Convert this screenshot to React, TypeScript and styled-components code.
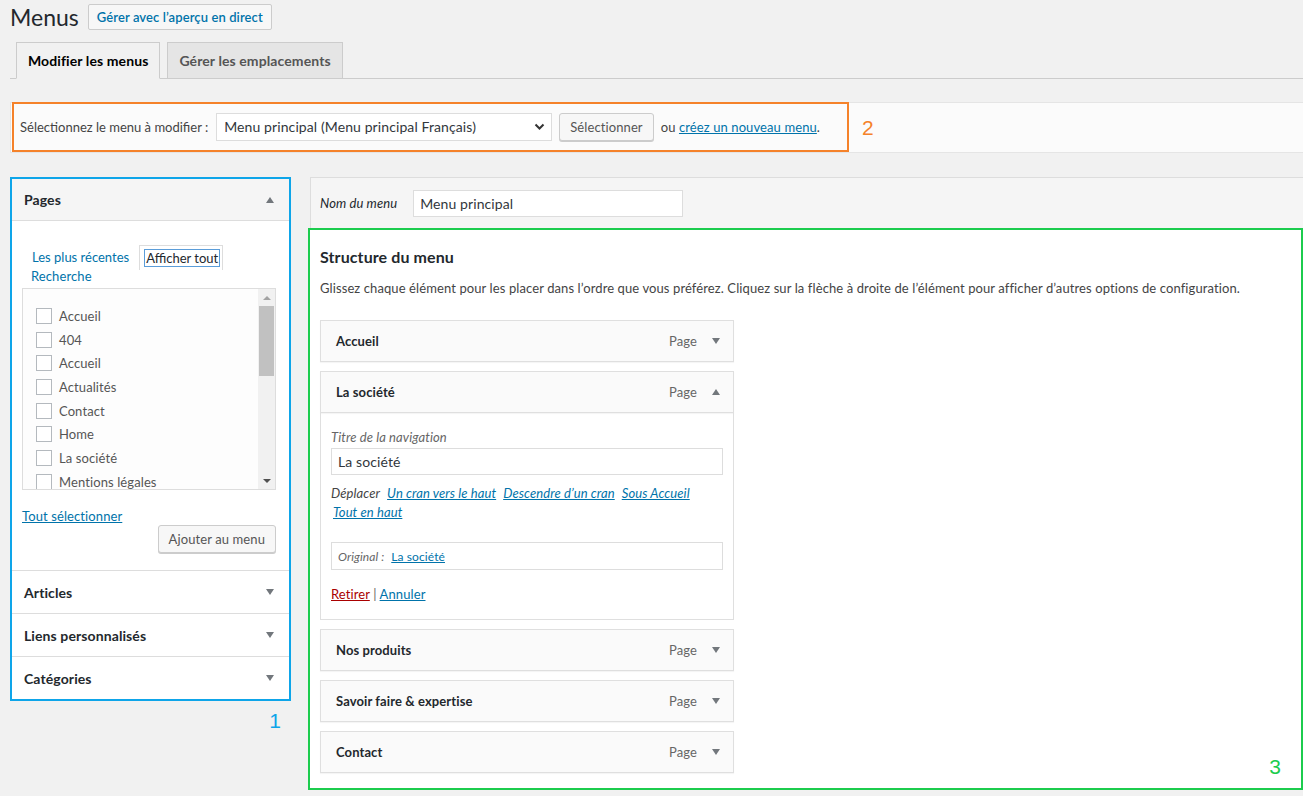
import React from 'react';
import styled, { createGlobalStyle } from 'styled-components';

const GlobalStyle = createGlobalStyle`
  body {
    margin: 0;
    background: #f1f1f1;
    font-family: Lato, "Liberation Sans", sans-serif;
    font-size: 13px;
    letter-spacing: 0.1px;
    color: #444;
  }
  * { box-sizing: border-box; }
`;

const Wrap = styled.div`
  padding: 4px 0 0 10px;
  width: 1303px;
`;

const HeaderRow = styled.div`
  display: flex;
  align-items: center;
  gap: 9px;
`;

const PageTitle = styled.h1`
  margin: 0;
  font-size: 23px;
  font-weight: 400;
  color: #23282d;
  line-height: 26px;
  letter-spacing: 0;
`;

const TitleButton = styled.button`
  height: 26px;
  padding: 0 8px;
  border: 1px solid #ccc;
  border-radius: 2px;
  background: #f7f7f7;
  color: #0073aa;
  font-family: inherit;
  font-size: 13px;
  font-weight: 600;
  letter-spacing: 0.1px;
`;

const Tabs = styled.div`
  display: flex;
  gap: 7px;
  margin-top: 12px;
  padding-left: 6px;
  border-bottom: 1px solid #ccc;
`;

const Tab = styled.div<{ $active?: boolean }>`
  height: 37px;
  margin-bottom: -1px;
  padding: 0 11px;
  display: flex;
  align-items: center;
  border: 1px solid #ccc;
  border-bottom-color: ${p => (p.$active ? '#f1f1f1' : '#ccc')};
  background: ${p => (p.$active ? '#f1f1f1' : '#e5e5e5')};
  color: ${p => (p.$active ? '#000' : '#555')};
  font-size: 14px;
  font-weight: 700;
`;

const ManageBar = styled.div`
  margin-top: 23px;
  display: flex;
  align-items: center;
  background: #fbfbfb;
  border: 1px solid #e5e5e5;
  border-right: none;
  height: 51px;
`;

const Annotated = styled.div<{ $color: string }>`
  border: 2px solid ${p => p.$color};
`;

const ManageBox = styled(Annotated)`
  display: flex;
  align-items: center;
  gap: 7px;
  height: 50px;
  margin: -2px 0 0 1px;
  padding: 0 0 0 6px;
  width: 837px;
`;

const Label = styled.span<{ $color: string }>`
  color: ${p => p.$color};
  font-family: "Liberation Sans", Arial, sans-serif;
  font-size: 21px;
`;

const BarText = styled.span`
  color: #444;
  margin-right: 1px;
  letter-spacing: 0;
`;

const Select = styled.div`
  width: 336px;
  height: 28px;
  display: flex;
  align-items: center;
  justify-content: space-between;
  padding: 0 6px 0 7px;
  border: 1px solid #ddd;
  background: #fff;
  color: #32373c;
  font-size: 14px;
`;

const Button = styled.button`
  height: 28px;
  padding: 0 10px;
  border: 1px solid #ccc;
  border-radius: 3px;
  background: #f7f7f7;
  box-shadow: 0 1px 0 #ccc;
  color: #555;
  font-family: inherit;
  font-size: 13px;
  letter-spacing: 0.1px;
`;

const Link = styled.a<{ $danger?: boolean }>`
  color: ${p => (p.$danger ? '#a00' : '#0073aa')};
  text-decoration: underline;
  cursor: pointer;
`;

const Columns = styled.div`
  display: flex;
  align-items: flex-start;
  gap: 17px;
  margin-top: 24px;
`;

const LeftColumn = styled.div`
  width: 281px;
  display: flex;
  flex-direction: column;
  align-items: flex-end;
`;

const SideBox = styled(Annotated)`
  width: 281px;
  margin-left: 1px;
  background: #fff;
`;

const Section = styled.div`
  border-bottom: 1px solid #ddd;
  &:last-child { border-bottom: none; }
`;

const SectionHead = styled.div<{ $open?: boolean }>`
  height: 42px;
  display: flex;
  align-items: center;
  justify-content: space-between;
  padding: 0 15px 0 12px;
  background: ${p => (p.$open ? '#f5f5f5' : '#fff')};
  border-bottom: ${p => (p.$open ? '1px solid #ddd' : 'none')};
  color: #23282d;
  font-size: 14px;
  font-weight: 700;
`;

const Arrow = styled.span<{ $up?: boolean }>`
  width: 0;
  height: 0;
  border-left: 4.5px solid transparent;
  border-right: 4.5px solid transparent;
  ${p => (p.$up ? 'border-bottom' : 'border-top')}: 6px solid #72777c;
`;

const SectionBody = styled.div`
  padding: 22px 13px 17px 10px;
`;

const InnerTabs = styled.div`
  display: flex;
  flex-wrap: wrap;
  align-items: flex-end;
  padding-left: 9px;
  line-height: 18px;
`;

const InnerTab = styled.span<{ $active?: boolean }>`
  padding: ${p => (p.$active ? '3px 3px 3px 5px' : '4px 9px 4px 0')};
  color: ${p => (p.$active ? '#23282d' : '#0073aa')};
  border: 1px solid ${p => (p.$active ? '#ddd' : 'transparent')};
  border-bottom: none;
  background: ${p => (p.$active ? '#fff' : 'transparent')};
  letter-spacing: 0;
  span { outline: ${p => (p.$active ? '1px solid #5b9dd9' : 'none')}; padding: 0 1px; }
`;

const InnerTabLine = styled.div`
  width: 100%;
  color: #0073aa;
  line-height: 13px;
  height: 12px;
  margin-bottom: 6px;
`;

const ListBox = styled.div`
  display: flex;
  height: 202px;
  border: 1px solid #ddd;
  background: #fdfdfd;
`;

const List = styled.ul`
  flex: 1;
  margin: 0;
  padding: 15px 0 0 13px;
  list-style: none;
  overflow: hidden;
`;

const ListItem = styled.li`
  display: flex;
  align-items: center;
  gap: 7px;
  height: 23.7px;
  color: #555;
  font-size: 13px;
`;

const Check = styled.span`
  width: 16px;
  height: 16px;
  border: 1px solid #b4b9be;
  background: #fff;
  flex: none;
`;

const ScrollTrack = styled.div`
  width: 17px;
  display: flex;
  flex-direction: column;
  align-items: center;
  background: #f1f1f1;
`;

const ScrollArrow = styled.div`
  height: 17px;
  display: flex;
  align-items: center;
  justify-content: center;
`;

const ScrollThumb = styled.div`
  width: 15px;
  height: 70px;
  background: #c1c1c1;
`;

const ScrollRest = styled.div`
  flex: 1;
`;

const SmallTri = styled.span<{ $up?: boolean }>`
  width: 0;
  height: 0;
  border-left: 4px solid transparent;
  border-right: 4px solid transparent;
  ${p => (p.$up ? 'border-bottom' : 'border-top')}: 4px solid ${p => (p.$up ? '#a3a3a3' : '#505050')};
`;

const SelectAll = styled.div`
  margin-top: 17px;
  line-height: 18px;
`;

const RightAlign = styled.div`
  display: flex;
  justify-content: flex-end;
`;

const MainColumn = styled.div`
  flex: 1;
  display: flex;
  flex-direction: column;
`;

const NameBar = styled.div`
  height: 51px;
  margin-left: 2px;
  margin-right: -2px;
  display: flex;
  align-items: center;
  gap: 16px;
  padding-left: 9px;
  background: #f5f5f5;
  border: 1px solid #ddd;
  border-right: none;
  border-bottom: none;
`;

const Italic = styled.span`
  font-style: italic;
  color: #23282d;
`;

const TextInput = styled.div<{ $width: string }>`
  width: ${p => p.$width};
  height: 27px;
  display: flex;
  align-items: center;
  padding: 0 6px;
  border: 1px solid #ddd;
  background: #fff;
  color: #32373c;
  font-size: 14px;
`;

const StructureBox = styled(Annotated)`
  position: relative;
  height: 562px;
  background: #fff;
  padding: 15px 10px 0 10px;
`;

const StructureTitle = styled.h3`
  margin: 0;
  font-size: 16px;
  font-weight: 700;
  color: #23282d;
  line-height: 24px;
`;

const Description = styled.p`
  margin: 11px 0 0;
  color: #444;
`;

const Items = styled.div`
  width: 414px;
  margin-top: 24px;
  display: flex;
  flex-direction: column;
  gap: 9px;
`;

const Item = styled.div``;

const ItemHead = styled.div`
  height: 42px;
  display: flex;
  align-items: center;
  padding: 0 13px 0 15px;
  background: #fafafa;
  border: 1px solid #dfdfdf;
  box-shadow: 0 1px 1px rgba(0, 0, 0, 0.04);
  color: #23282d;
  font-weight: 700;
`;

const ItemTitle = styled.span`
  flex: 1;
`;

const ItemType = styled.span`
  color: #666;
  font-weight: 400;
  margin-right: 15px;
`;

const Settings = styled.div`
  border: 1px solid #dfdfdf;
  border-top: none;
  padding: 15px 10px 17px 10px;
  font-size: 13px;
`;

const FieldLabel = styled.div`
  font-style: italic;
  color: #666;
  line-height: 18px;
`;

const MoveRow = styled.div`
  margin-top: 9px;
  line-height: 19px;
  font-style: italic;
  a { margin-left: 7px; }
  a:nth-of-type(4) { margin-left: 2px; }
`;

const Original = styled.div`
  margin-top: 20px;
  height: 28px;
  display: flex;
  align-items: center;
  gap: 7px;
  padding: 0 6px;
  border: 1px solid #ddd;
  font-size: 12px;
`;

const Actions = styled.div`
  margin-top: 16px;
  color: #666;
`;

const CornerLabel = styled(Label)`
  position: absolute;
  right: 20px;
  bottom: 9px;
`;

const pages = ['Accueil', '404', 'Accueil', 'Actualités', 'Contact', 'Home', 'La société', 'Mentions légales'];

const menuItems = ['Nos produits', 'Savoir faire & expertise', 'Contact'];

const App: React.FC = () => {
  return (
    <>
      <GlobalStyle />
      <Wrap>
        <HeaderRow>
          <PageTitle>Menus</PageTitle>
          <TitleButton>Gérer avec l’aperçu en direct</TitleButton>
        </HeaderRow>

        <Tabs>
          <Tab $active>Modifier les menus</Tab>
          <Tab>Gérer les emplacements</Tab>
        </Tabs>

        <ManageBar>
          <ManageBox $color="#f5822a">
            <BarText>Sélectionnez le menu à modifier :</BarText>
            <Select>
              Menu principal (Menu principal Français)
              <svg width="11" height="8" viewBox="0 0 11 8">
                <path d="M1.5 1.5 L5.5 5.5 L9.5 1.5" fill="none" stroke="#333" strokeWidth="2" />
              </svg>
            </Select>
            <Button>Sélectionner</Button>
            <span>
              ou <Link>créez un nouveau menu</Link>.
            </span>
          </ManageBox>
          <Label $color="#f5822a" style={{ marginLeft: 13 }}>2</Label>
        </ManageBar>

        <Columns>
          <LeftColumn>
            <SideBox $color="#0ea5e9">
              <Section>
                <SectionHead $open>
                  Pages
                  <Arrow $up />
                </SectionHead>
                <SectionBody>
                  <InnerTabs>
                    <InnerTab>Les plus récentes</InnerTab>
                    <InnerTab $active><span>Afficher tout</span></InnerTab>
                    <InnerTabLine>Recherche</InnerTabLine>
                  </InnerTabs>
                  <ListBox>
                    <List>
                      {pages.map((p, i) => (
                        <ListItem key={i}>
                          <Check />
                          {p}
                        </ListItem>
                      ))}
                    </List>
                    <ScrollTrack>
                      <ScrollArrow><SmallTri $up /></ScrollArrow>
                      <ScrollThumb />
                      <ScrollRest />
                      <ScrollArrow><SmallTri /></ScrollArrow>
                    </ScrollTrack>
                  </ListBox>
                  <SelectAll>
                    <Link>Tout sélectionner</Link>
                  </SelectAll>
                  <RightAlign>
                    <Button>Ajouter au menu</Button>
                  </RightAlign>
                </SectionBody>
              </Section>
              {['Articles', 'Liens personnalisés', 'Catégories'].map(s => (
                <Section key={s}>
                  <SectionHead>
                    {s}
                    <Arrow />
                  </SectionHead>
                </Section>
              ))}
            </SideBox>
            <Label $color="#0ea5e9" style={{ marginTop: 8, marginRight: 10 }}>1</Label>
          </LeftColumn>

          <MainColumn>
            <NameBar>
              <Italic>Nom du menu</Italic>
              <TextInput $width="270px">Menu principal</TextInput>
            </NameBar>
            <StructureBox $color="#1ccc4e">
              <StructureTitle>Structure du menu</StructureTitle>
              <Description>
                Glissez chaque élément pour les placer dans l’ordre que vous préférez. Cliquez sur la flèche à droite de l’élément pour afficher d’autres options de configuration.
              </Description>
              <Items>
                <Item>
                  <ItemHead>
                    <ItemTitle>Accueil</ItemTitle>
                    <ItemType>Page</ItemType>
                    <Arrow />
                  </ItemHead>
                </Item>
                <Item>
                  <ItemHead>
                    <ItemTitle>La société</ItemTitle>
                    <ItemType>Page</ItemType>
                    <Arrow $up />
                  </ItemHead>
                  <Settings>
                    <FieldLabel>Titre de la navigation</FieldLabel>
                    <TextInput $width="100%" style={{ marginTop: 2 }}>La société</TextInput>
                    <MoveRow>
                      Déplacer
                      <Link>Un cran vers le haut</Link>
                      <Link>Descendre d’un cran</Link>
                      <Link>Sous Accueil</Link>
                      <br />
                      <Link>Tout en haut</Link>
                    </MoveRow>
                    <Original>
                      <Italic style={{ color: '#666' }}>Original :</Italic>
                      <Link>La société</Link>
                    </Original>
                    <Actions>
                      <Link $danger>Retirer</Link> | <Link>Annuler</Link>
                    </Actions>
                  </Settings>
                </Item>
                {menuItems.map(m => (
                  <Item key={m}>
                    <ItemHead>
                      <ItemTitle>{m}</ItemTitle>
                      <ItemType>Page</ItemType>
                      <Arrow />
                    </ItemHead>
                  </Item>
                ))}
              </Items>
              <CornerLabel $color="#1ccc4e">3</CornerLabel>
            </StructureBox>
          </MainColumn>
        </Columns>
      </Wrap>
    </>
  );
};

export default App;
